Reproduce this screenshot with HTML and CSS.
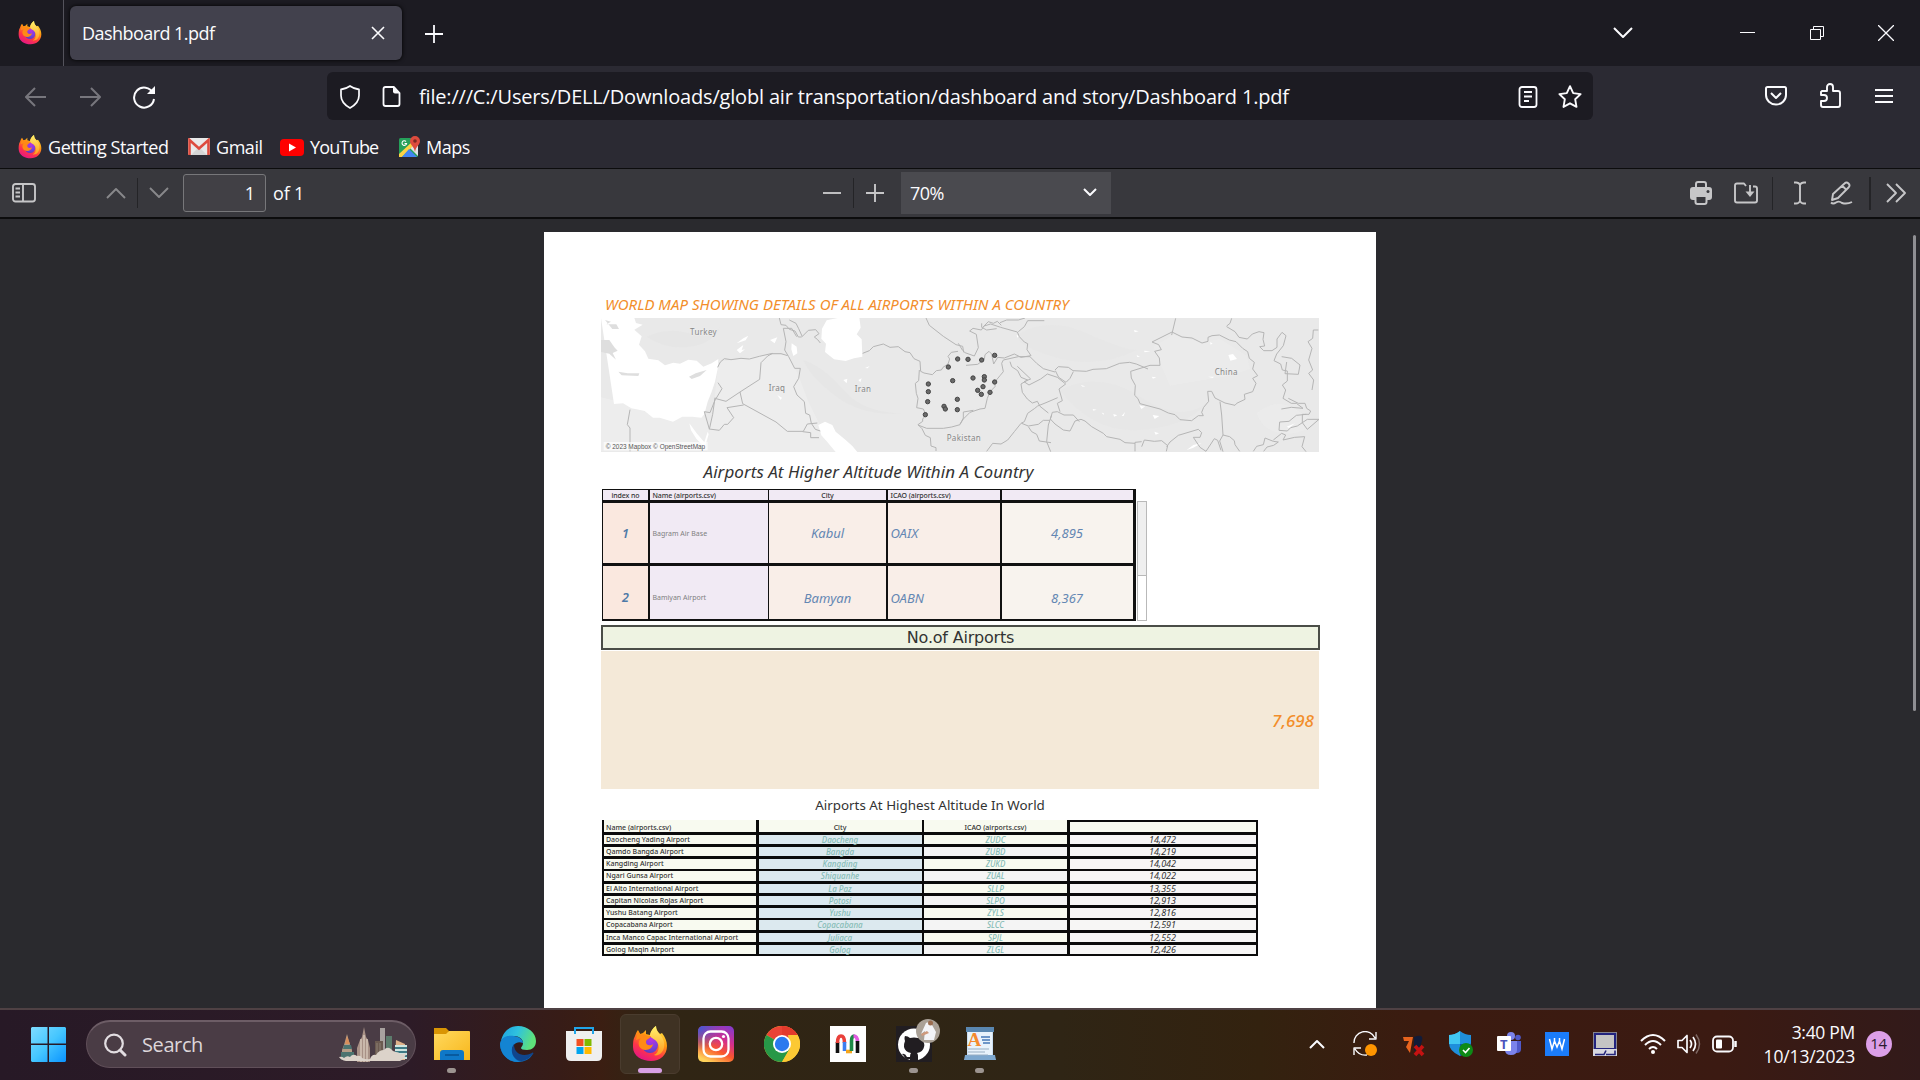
FILE: index.html
```html
<!DOCTYPE html>
<html lang="en">
<head>
<meta charset="utf-8">
<title>Dashboard 1.pdf</title>
<link rel="stylesheet" href="styles.css">
</head>
<body>
<svg width="0" height="0" class="defs">
  <defs>
    <linearGradient id="ffBody" x1=".8" y1="0" x2=".3" y2="1"><stop offset="0" stop-color="#fff44f"/><stop offset=".4" stop-color="#ff980e"/><stop offset=".7" stop-color="#ff3647"/><stop offset="1" stop-color="#e31587"/></linearGradient>
    <radialGradient id="ffGlobe" cx=".6" cy=".2" r=".8"><stop offset="0" stop-color="#b833e1"/><stop offset=".6" stop-color="#7a3fe0"/><stop offset="1" stop-color="#5b3fc0"/></radialGradient>
    <linearGradient id="ffFlame" x1="0" y1="0" x2="0" y2="1"><stop offset="0" stop-color="#fff36e"/><stop offset="1" stop-color="#ff9a1f"/></linearGradient>
    <symbol id="firefox" viewBox="0 0 36 36">
      <path d="M3 10C4 7 5 5 6 4l2 4 3-1 3-3v4l4 1c1-4 3-7 6-9 0 4 2 6 4 8l2-1c3 4 5 8 5 13 0 9-7 15-16 15S1 30 1 21c0-4 0-8 2-11z" fill="url(#ffBody)"/>
      <circle cx="18" cy="19" r="8" fill="url(#ffGlobe)"/>
      <path d="M24 0c0 5 3 7 6 11 3 5 3 11 0 15-2 3-6 4-8 3 5-2 6-9 3-13-2-3-5-3-7-6 0-4 3-8 6-10z" fill="url(#ffFlame)"/>
      <path d="M6 5l3 4c2-1 4-1 6 1h4c-1 3-5 3-5 6 0 4 5 4 7 2-1 7-11 8-14 2-1-3 0-6 2-8L4 14z" fill="#ff8a16"/>
    </symbol>
  </defs>
</svg>
<div class="screen">
  <header class="tabbar">
    <div class="pinned"><svg width="24" height="24"><use href="#firefox"/></svg></div>
    <div class="tab"><span class="tab-title">Dashboard 1.pdf</span>
      <svg width="14" height="14" viewBox="0 0 14 14" class="line"><path d="M1 1l12 12M13 1L1 13"/></svg></div>
    <svg class="newtab line" width="18" height="18" viewBox="0 0 18 18"><path d="M9 0v18M0 9h18" stroke-width="1.8"/></svg>
    <div class="winctl">
      <svg class="line" width="20" height="12" viewBox="0 0 20 12"><path d="M1 1l9 9 9-9" stroke-width="2"/></svg>
      <svg class="line" width="16" height="16" viewBox="0 0 16 16"><path d="M0 7.5h15" stroke-width="1"/></svg>
      <svg class="line" width="16" height="16" viewBox="0 0 16 16"><path d="M1.500 4.500h10v10h-10zM4.500 4V1.500h10v10H12" stroke-width="1"/></svg>
      <svg class="line" width="16" height="16" viewBox="0 0 16 16"><path d="M0 0l16 16M16 0L0 16" stroke-width="1.300"/></svg>
    </div>
  </header>

  <nav class="navbar">
    <div class="navbtns">
      <svg class="line dim" width="22" height="20" viewBox="0 0 22 20"><path d="M10 1L1 10l9 9M1 10h20"/></svg>
      <svg class="line dim" width="22" height="20" viewBox="0 0 22 20"><path d="M12 1l9 9-9 9M21 10H1"/></svg>
      <svg class="line" width="24" height="24" viewBox="0 0 24 24"><path d="M21 8A10 10 0 1 0 22 14" stroke-width="2"/><path d="M23 1v8h-8z" fill="#fbfbfe" stroke="none"/></svg>
    </div>
    <div class="urlbar">
      <svg class="line" width="24" height="24" viewBox="0 0 24 24"><path d="M12 1C9 3 6 4 2 4.500v6C2 16 6 20 12 23c6-3 10-7 10-12.500v-6C18 4 15 3 12 1z" stroke-width="1.900" transform="translate(1.200 0) scale(.9 1)"/></svg>
      <svg class="line" width="20" height="24" viewBox="0 0 20 24"><path d="M12 2H3.500Q1.500 2 1.500 4v15q0 2 2 2h12q2 0 2-2V8z" stroke-width="1.800"/><path d="M11 1.500l7 7h-5q-2 0-2-2z" fill="#fbfbfe" stroke="none"/></svg>
      <span class="url">file:///C:/Users/DELL/Downloads/globl air transportation/dashboard and story/Dashboard 1.pdf</span>
      <svg class="line" width="20" height="22" viewBox="0 0 20 22"><rect x="1.500" y="1" width="17" height="20" rx="2.500" stroke-width="1.800"/><path d="M6 6h8M6 10.500h8M6 15h5" stroke-width="1.800"/></svg>
      <svg class="line" width="24" height="24" viewBox="0 0 24 24"><path d="M12 1.200l3.200 6.900 7.400 1-5.400 5.200 1.300 7.600-6.500-3.600-6.500 3.600 1.300-7.600L1.400 9.100l7.400-1z" stroke-width="1.900"/></svg>
    </div>
    <div class="navend">
      <svg class="line" width="24" height="22" viewBox="0 0 24 22"><path d="M3.500 2h17Q22 2 22 3.500V10a10 9.500 0 0 1-20 0V3.500Q2 2 3.500 2z" stroke-width="2"/><path d="M7 8l5 5 5-5" stroke-width="2"/></svg>
      <svg class="line" width="24" height="26" viewBox="0 0 24 26"><path d="M3 8h5V4a3 3 0 0 1 6 0v4h5q2 0 2 2v12q0 2-2 2H4q-2 0-2-2v-4h3a3 3 0 0 0 0-6H2V9z" stroke-width="1.900"/></svg>
      <svg class="line" width="18" height="16" viewBox="0 0 18 16"><path d="M0 2h18M0 8h18M0 14h18" stroke-width="1.800"/></svg>
    </div>
  </nav>

  <div class="bookmarks">
    <a class="bm bm1"><svg width="24" height="24"><use href="#firefox"/></svg>Getting Started</a>
    <a class="bm bm2"><svg width="22" height="18" viewBox="0 0 22 18"><rect width="22" height="17" rx="1.500" fill="#e9e9e9"/><path d="M3 17l8-8 8 8" fill="#d5d5d5"/><path d="M1.500 17V2L11 10.500 20.500 2v15" fill="none" stroke="#dd4b3e" stroke-width="2.600"/></svg>Gmail</a>
    <a class="bm bm3"><svg width="24" height="17" viewBox="0 0 24 17"><rect width="24" height="17" rx="4" fill="#f00"/><path d="M9 4.500v8l7-4z" fill="#fff"/></svg>YouTube</a>
    <a class="bm bm4"><svg width="22" height="22" viewBox="0 0 22 22"><rect x="1" y="2" width="19" height="19" rx="1.500" fill="#25a05a"/><path d="M20 4v16L11 11z" fill="#dfe3e6"/><path d="M1 21v-3L14 6l2 3-12 12z" fill="#fbd345"/><path d="M4 21l7-8 8 8z" fill="#4285f4"/><path d="M17 0a5 5 0 0 1 5 5c0 4-4 5-5 11-1-6-5-7-5-11a5 5 0 0 1 5-5z" fill="#dd4b3e"/><circle cx="17" cy="5" r="1.800" fill="#7c2a22"/><path d="M8 5.500a2.300 2.300 0 1 0 .6 2H6.500" fill="none" stroke="#fff" stroke-width="1.100"/></svg>Maps</a>
  </div>

  <div class="pdfbar">
    <div class="pdf-left">
      <svg class="tool" width="24" height="20" viewBox="0 0 24 20"><rect x="1" y="1" width="22" height="17.500" rx="2.500"/><path d="M11 1v17M3.500 5.500h4.500M3.500 9.500h4.500M3.500 13.500h4.500"/></svg>
      <svg class="tool faint up" width="20" height="12" viewBox="0 0 20 12"><path d="M1 11l9-9 9 9"/></svg>
      <i class="sep"></i>
      <svg class="tool faint" width="20" height="12" viewBox="0 0 20 12"><path d="M1 1l9 9 9-9"/></svg>
      <span class="pageinput">1</span><span class="of">of 1</span>
    </div>
    <div class="pdf-zoom">
      <svg class="tool" width="20" height="20" viewBox="0 0 20 20"><path d="M1 10h18"/></svg>
      <i class="sep"></i>
      <svg class="tool" width="20" height="20" viewBox="0 0 20 20"><path d="M1 10h18M10 1v18"/></svg>
      <span class="select">70%<svg class="line" width="14" height="9" viewBox="0 0 14 9"><path d="M1 1l6 6 6-6" stroke-width="2"/></svg></span>
    </div>
    <div class="pdf-right">
      <svg width="24" height="24" viewBox="0 0 24 24" fill="#c6c6c8"><path d="M7 6V3q0-2 2-2h6q2 0 2 2v3" fill="none" stroke="#c6c6c8" stroke-width="2"/><path d="M4 6h16q3 0 3 3v7q0 3-3 3h-3v-4H7v4H4q-3 0-3-3V9q0-3 3-3z"/><circle cx="19" cy="10.500" r="1.500" fill="#38383d"/><path d="M6.500 15h11v6q0 2-2 2h-7q-2 0-2-2z" fill="#38383d" stroke="#c6c6c8" stroke-width="2"/></svg>
      <svg class="tool" width="24" height="22" viewBox="0 0 24 22"><path d="M12 4l-2-2.500H3q-2 0-2 2v15q0 2 2 2h18q2 0 2-2v-12Q23 4.500 21 4.500h-2M16 3v8"/><path d="M11.500 9.500h9L16 15z" fill="#c6c6c8" stroke="none"/></svg>
      <i class="sep s1"></i>
      <svg class="tool" width="14" height="24" viewBox="0 0 14 24"><path d="M1 1.500h2q3 0 4 2.500 1-2.500 4-2.500h2M7 4v16M1 22.500h2q3 0 4-2.500 1 2.500 4 2.500h2"/></svg>
      <svg class="tool" width="24" height="24" viewBox="0 0 24 24"><path d="M3 13L14.500 2.500q2-2 4 0t0 4L8 17l-6 2zM12.500 5l4 4M1 21.500q2 2 5 0t6 .5q5 1.500 10-1"/></svg>
      <i class="sep s2"></i>
      <svg class="tool" width="22" height="20" viewBox="0 0 22 20"><path d="M2 1l9 9-9 9M11 1l9 9-9 9"/></svg>
    </div>
  </div>

  <main class="viewer">
    <article class="page">
      <h1 class="maptitle">WORLD MAP SHOWING DETAILS OF ALL AIRPORTS WITHIN A COUNTRY</h1>
      <svg class="map" width="718" height="134" viewBox="0 0 2154 402">
        <rect width="2154" height="402" fill="#e9e9e9"/>
        <g transform="translate(-33 -114)">
          <g fill="#ededed"><path d="M33 352l60 15 40 20 80 17 60-12 65 2 20 55-5 65H33z"/><path d="M385 245l150-20 60 0 30 60 30 80 35 70 60 80H350l10-70 15-100z"/></g>
          <g fill="#e6e6e6"><path d="M170 170q60-30 130-10t90-20q-20 50-90 60t-130-30z"/><path d="M640 240q60 20 120 90t180 70q-120 10-200-50t-100-110z"/></g>
          <path d="M33 114h100l5 15 20 5-25 15 22 20-8 25 18 20 10 22 30 5 20 15 25-8 20 3 25-12 25 3 20 18 25-10 20-13-2 30-8 38-10 30-12 30-10 38-9 10-27-3-30 0-28 15-40-12-20 0-25-20-40-8-25-15-27 2z" fill="#fff"/>
          <path d="M33 180l25 0 15 22 10 10-15 7 10 20-20-18-25-5zM45 120l18 5-14 8 30 0 8 14-20 0zM85 275l28 5 35 0-3 8-50-2zM297 290l20-10 33-10-20 18-25 9z" fill="#dedede"/>
          <path d="M710 121l38-8 60 0 4 30-12 20 15 15 2 52-25 5-25 8-35-5-27-22 3-25-14-15 2-30zM685 435l20-10 22 10 10 20 30 25 20 18 15 18h-65l-25-30-18-20zM298 430l22 30 23 27 10-32 3 8-12 40-10-12-15-15-16-25zM605 190l15 10 2 20-12 8-6-20zM540 180l22-8-8 18zM440 210l20-15-5 15 10-2-15 12zM440 190l20-15 15-8-8 14zM760 300l12-4-2 14zM805 300l10-5-4 12zM562 345l14 8-4 7zM825 264l14-6-6 7z" fill="#fff"/>
          <g class="border">
            <path d="M383 262l8-16 12-10 20 3 30-4 25 2 30-8 35-8 30 0 20 6M548 220l-15 8-20 20-4 50-56 36-45 30-30-8 18-30-12-18M450 336l8 35 100 55 34 28h48l12-22 30-3M375 353l-7 50-10 45M378 353l-18 45-17-3 15 52 30 4 15-18 10 0 18-20-20-30 50-8M638 455l24 3 0 15 25 0M120 514v-70l-8-10 8-45M580 145l8 40-4 25 12 20 18 35 17 0-5 30-15 25 10 25 22 20 4 35 12 5 5 25 12 18 15 5M568 114l5 20 15 2 10 12 17 5 10 18 10 0 20-20 22-2 10 12-14 10 10 8 8 10M598 120l20 10 8 16 10 22M580 145l25 0 15 25M818 220l20-8 12-12 30-8 20 10 25-2 20 15 15 3 12 18 18 8 2 30 10 5 25 5 12-12 15-2 5-8 15-10 5-15-5-8 10-12 20-3M1008 114l10 22 42 33 38 25 20 5 3 18M988 270l-2 32-10 8 3 30 5 15-4 28 20 4 8 18-10 12 0 7-14 10 12 12 10 20 15 7 2 25 15 5 0 10M984 435l26 10 50 0 25-4 25-7 10-20 0-18 30-5"/>
          </g>
        </g>
        <g transform="translate(1077 -114)">
          <g fill="#e7e7e7"><path d="M180 160q90-50 200 0t150 50q-120 60-250 20T180 160z"/><path d="M300 330q120-60 240 20t200 20q-60 70-200 80t-240-120z"/></g>
          <g fill="#ededed"><path d="M890 400q60-50 120-10t60 20q-20 50-90 50t-90-60zM580 200l60-35 80 22 60-10 80 50 10 40-60 20-180 30z" opacity=".6"/></g>
          <path d="M805 225l14-3 12 15-20 5zM522 150l14 4-12 3zM552 212l20 2-18 3zM530 225l10 5-8 1zM578 405l20 3-14 9zM538 375l8 4 10 0-12 8zM460 402l12 4-10 4zM485 408l10-12-4 12zM398 387l12 2-10 3zM575 290l14 2-10 4zM744 290l18 0-4 4zM362 315l14 4-8 1zM750 187l8 3-6 4zM425 398l6 1 0 6zM170 165l8 2-6 6zM680 510l20-15 25-6-25 14zM980 440l25-10-18 14zM583 455l14 5-10 4z" fill="#fff"/>
          <g class="border">
            <path d="M-5 190l12 20 8 8 28 10 12-25-6-40-20-10 10-8 25 5 8-12 20-6 30 10 50 14 6 14 15 16 10 5-2 18 12 18-30 5-20-10-30 12-20-2-12 20-6-30-8-8-12 10-2 14-20 15-35 3M65 130l0 12 15 8 30-4M130 240l45-10 35 0 20 20 20 16 35 10M285 270l10-10 30 2 14 10 40 2 20-6 40-2 40-16 30-3 20 5 35 15M340 275l-10 20-12 12-22-15-10-20M570 256l30 0-2-22-14-20 20-5-8-15-20-8 60-30 30 15 30 3 30 15 18-5 0-12 12-5 22-2 30 15 20 5 20 20 15 10 5 20 15 12-5 20 15 20-15 8 10 15-10 25-25 8 2 15-25 12-5 6-30-7-30-15-10-20-12 0 3 30-15 18-6 15 5 10-15 0-20 15-35-3-15-15-20-5-25-12-30-8-30-8-6-15-10-10 2-30-12-22-2-20zM635 165l12-50M800 140l25 15 12 17 25 5 15-15 20-7 15 3-3 20 5 20-15 2 12 12 25 0 15-10 0-25 15-20 12 10-8 30-20 25-8 20 20 10 5 18 15 3 0 30-15 12 10 15-8 25 25 15 15 0 20 15-35-3-30 5M815 115l-5 15-10 8M965 230l30 5 25 20-5 28-40-2 5-35M1075 150l-15 0-2 25-14 10 12 20-10 35 12 30-12 10 15 20-5 30M985 355l30 15 20 0 5 15 12 8-5 10-20 0 0 25 15 20 35-30-35 0-30 20-20 5-10 10-25-2 2-25 28-2 22-18 30-3M780 365l5 40 4 60-10 18 10 32M789 465l20 5 14 12 2 12 14 20M880 514l10-15 20-5 5-20 25 10 15 2-14 10-20 5-10 13M940 480l25-20 12 5-8 15 35-8 30-2-8 30 12 15M620 500l10-14 25-20 60-18 10 10-5 14-20 0 20 30 18 12 25-38 10 5 10 30M545 500l8-20 30 4 22-2 18 15-4 17M545 485l-20 2 0 27M525 490l-30-2-15-10-40-8-10-10-35-20-20-17-12-5-18 5-15 30-20-3-25-18-14-15 6-20 15-2 20 10 28 0 18 20"/>
            <path d="M130 240l-5 10 5 25-10 12-15 18 0 15-15 15-8 20-7 30-15 2-30 10-20 20-10 15M80 514l18-24 25 2 20-12 20-25 20-25 10-5 10-25 20-14 10-8 25-10 35-15M185 430l20 8 30-5 15-12 20 0M205 440l10 15 15 8 8 20 35 5M300 395l-8-25 15-8-10-35 20-15-25-20-30-10-20 15-35 18-15-10 20-8-40-38M275 405l-10 30-5 50 12 30M150 245l5 15 18 12 10 20 20 8-20 12 4 25 15 20 15 12 15-5 8 15 25 20M70 140l15-15 15 5 12-6 12 12M120 128l20-8 35 0 20-6M175 155l18-15 10-18 50 0" />
          </g>
        </g>
        <g class="maplabels">
          <text x="267" y="52">Turkey</text><text x="503" y="219">Iraq</text><text x="761" y="222">Iran</text><text x="1037" y="368">Pakistan</text><text x="1841" y="171">China</text>
        </g>
        <rect x="8" y="372" width="312" height="25" fill="#fff" opacity=".65"/>
        <text x="14" y="393" class="credit">© 2023 Mapbox © OpenStreetMap</text>
        <g class="pins">
          <circle cx="1070" cy="123" r="6.500"/><circle cx="1101" cy="124" r="6.500"/><circle cx="1142" cy="126" r="6.500"/><circle cx="1181" cy="112" r="6.500"/><circle cx="1042" cy="147" r="6.500"/><circle cx="1055" cy="188" r="6.500"/><circle cx="982" cy="198" r="6.500"/><circle cx="982" cy="221" r="6.500"/><circle cx="980" cy="251" r="6.500"/><circle cx="973" cy="290" r="6.500"/><circle cx="1029" cy="265" r="6.500"/><circle cx="1033" cy="273" r="6.500"/><circle cx="1069" cy="244" r="6.500"/><circle cx="1069" cy="275" r="6.500"/><circle cx="1116" cy="180" r="6.500"/><circle cx="1150" cy="176" r="6.500"/><circle cx="1150" cy="186" r="6.500"/><circle cx="1181" cy="192" r="6.500"/><circle cx="1146" cy="206" r="6.500"/><circle cx="1130" cy="217" r="6.500"/><circle cx="1167" cy="223" r="6.500"/><circle cx="1141" cy="229" r="6.500"/>
        </g>
      </svg>

      <h2 class="h-country">Airports At Higher Altitude Within A Country</h2>
      <div class="country">
        <div class="ctable">
          <b class="ch c">index no</b><b class="ch">Name (airports.csv)</b><b class="ch c">City</b><b class="ch">ICAO (airports.csv)</b><b class="ch"></b>
          <span class="ix">1</span><span class="nm">Bagram Air Base</span><span class="ct c">Kabul</span><span class="ct">OAIX</span><span class="el c">4,895</span>
          <span class="ix low">2</span><span class="nm low">Bamiyan Airport</span><span class="ct c low">Bamyan</span><span class="ct low">OABN</span><span class="el c low">8,367</span>
        </div>
        <div class="cscroll"><i></i></div>
      </div>

      <div class="count-head">No.of Airports</div>
      <div class="count">7,698</div>

      <h2 class="h-world">Airports At Highest Altitude In World</h2>
      <div class="wtable">
        <div class="wh">Name (airports.csv)</div><div class="wh c">City</div><div class="wh c">ICAO (airports.csv)</div><div class="wh"></div>
        <div class="n">Daocheng Yading Airport</div><div class="t">Daocheng</div><div class="i">ZUDC</div><div class="e">14,472</div>
        <div class="n">Qamdo Bangda Airport</div><div class="t">Bangda</div><div class="i alt">ZUBD</div><div class="e">14,219</div>
        <div class="n">Kangding Airport</div><div class="t">Kangding</div><div class="i">ZUKD</div><div class="e">14,042</div>
        <div class="n">Ngari Gunsa Airport</div><div class="t">Shiquanhe</div><div class="i alt">ZUAL</div><div class="e">14,022</div>
        <div class="n">El Alto International Airport</div><div class="t">La Paz</div><div class="i">SLLP</div><div class="e">13,355</div>
        <div class="n">Capitan Nicolas Rojas Airport</div><div class="t">Potosi</div><div class="i alt">SLPO</div><div class="e">12,913</div>
        <div class="n">Yushu Batang Airport</div><div class="t">Yushu</div><div class="i">ZYLS</div><div class="e">12,816</div>
        <div class="n">Copacabana Airport</div><div class="t">Copacabana</div><div class="i alt">SLCC</div><div class="e">12,591</div>
        <div class="n">Inca Manco Capac International Airport</div><div class="t">Juliaca</div><div class="i">SPJL</div><div class="e">12,552</div>
        <div class="n">Golog Maqin Airport</div><div class="t">Golog</div><div class="i alt">ZLGL</div><div class="e">12,426</div>
      </div>
    </article>
    <i class="vscroll"></i>
  </main>

  <footer class="taskbar">
    <svg class="start" width="35" height="35" viewBox="0 0 35 35"><defs><linearGradient id="win" x1="0" y1="0" x2="1" y2="1" gradientUnits="objectBoundingBox"><stop offset="0" stop-color="#7fdcff"/><stop offset=".5" stop-color="#45c6ff"/><stop offset="1" stop-color="#0a93ff"/></linearGradient></defs><path d="M1 0h15.500v16.500H0V1zM18 0h16l1 1v15.500H18zM0 18h16.500v17H1l-1-1zM18 18h17v16l-1 1H18z" fill="url(#win)"/></svg>
    <div class="search">
      <svg width="24" height="24" viewBox="0 0 24 24" fill="none" stroke="#e2dde1" stroke-linecap="round"><circle cx="11" cy="10.500" r="8.800" stroke-width="2.200"/><path d="M17 17l5 5" stroke-width="3"/></svg>
      <span>Search</span>
      <svg width="70" height="38" viewBox="0 0 70 38">
        <path d="M4 34V24l2-5 3-11 3 11 2 5v10z" fill="#b59d87"/><path d="M6 19h7l1 4H5zM3 26h13v8H3z" fill="#4c7470"/><path d="M9 10l3 8H7z" fill="#d98f5a"/>
        <path d="M19 36V22l3-8 2-3 2-10 2 10 2 3 2 8v14z" fill="#a89186"/><path d="M23 36V13M26 36V9M29 36V13" stroke="#e0d2c4" stroke-width="1.200"/>
        <path d="M42 2h5v24h-5z" fill="#a8a19f"/><path d="M48 10h6v18h-6z" fill="#5c7b6c"/><path d="M37 15h8v14h-8z" fill="#6b5a50"/><path d="M39 17v12M42 17v12" stroke="#8d8075"/>
        <path d="M58 14l9 4v16H57z" fill="#dfb28a"/><path d="M57 19h12v14H57z" fill="#cfe4df"/><path d="M57 22h12M57 26h12M57 30h12" stroke="#3e7a85" stroke-width="2"/>
        <path d="M1 31q3-1 5 1 3-3 6-1 3-4 7-1 4-1 5 2 4 2 8 1 2-5 6-4 3-5 8-5 3-4 7-1 2 3 5 3 3 0 4 2 4 0 6-1-1 6-6 8H8q-5-1-7-4z" fill="#dcd3ca"/>
      </svg>
    </div>
    <div class="apps">
      <div class="app"><svg width="36" height="36" viewBox="0 0 36 36"><defs><linearGradient id="fold" x1="0" y1="0" x2="1" y2="1"><stop offset="0" stop-color="#ffd95e"/><stop offset="1" stop-color="#f8b71c"/></linearGradient></defs><path d="M0 2h12l3 3-3 6H0z" fill="#d99504"/><path d="M0 8h12l3-3h20q1 0 1 1v28H0z" fill="url(#fold)"/><path d="M6 34v-7q0-3 3-3h18q3 0 3 3v7z" fill="#0f78c8"/><path d="M11 29h14" stroke="#075395" stroke-width="1.600"/></svg><i class="dot"></i></div>
      <div class="app"><svg width="36" height="36" viewBox="0 0 36 36"><defs><linearGradient id="ed" x1="0" y1="0" x2="1" y2=".3"><stop offset="0" stop-color="#1d9fe0"/><stop offset=".5" stop-color="#2fc2df"/><stop offset="1" stop-color="#5ee27a"/></linearGradient></defs><path d="M18 36A18 18 0 0 1 0 18l10-6 6 2-4 8 6 10 8 1 7-5q-5 8-15 8z" fill="#0d6cbd"/><path d="M1 15C3 5 10 0 18 0c10 0 18 7 18 15 0 6-4 9-9 9-4 0-6-1-6-2 0-1 2-2 2-5 0-4-4-7-9-7S4 11 1 15z" fill="url(#ed)"/><path d="M0 17C2 10 9 9 14 10c6 1 9 4 9 7-7-3-12 3-11 9s5 9 9 10C8 37 0 28 0 17z" fill="#1484d2"/><path d="M14 18c-3 4-3 10 1 14s10 5 18-4c1-1 0-2-1-1-8 4-18 2-18-9z" fill="#10458c"/></svg></div>
      <div class="app"><svg width="36" height="36" viewBox="0 0 36 36"><path d="M0 5h36v25q0 5-5 5H5q-5 0-5-5z" fill="#efefef"/><path d="M9 8V2h18v6" fill="none" stroke="#20a5e8" stroke-width="2"/><path fill="#f25022" d="M10.500 13h7v7h-7z"/><path fill="#7fba00" d="M18.500 13h7v7h-7z"/><path fill="#00a4ef" d="M10.500 21h7v7h-7z"/><path fill="#ffb900" d="M18.500 21h7v7h-7z"/></svg></div>
      <div class="app active"><svg width="36" height="36"><use href="#firefox"/></svg><i class="dot wide"></i></div>
      <div class="app"><svg width="36" height="36" viewBox="0 0 36 36"><defs><linearGradient id="ig" x1=".3" y1="1" x2=".8" y2="0"><stop offset="0" stop-color="#ffd25a"/><stop offset=".35" stop-color="#f9572c"/><stop offset=".65" stop-color="#d52e8c"/><stop offset="1" stop-color="#8a3ac8"/></linearGradient><radialGradient id="igb" cx="0" cy="0" r=".7"><stop offset="0" stop-color="#3a5bd8"/><stop offset="1" stop-color="#3a5bd8" stop-opacity="0"/></radialGradient></defs><rect width="36" height="36" rx="5" fill="url(#ig)"/><rect width="36" height="36" rx="5" fill="url(#igb)"/><rect x="5.500" y="5.500" width="25" height="25" rx="7" fill="none" stroke="#fff" stroke-width="2.300"/><circle cx="18" cy="18" r="6.200" fill="none" stroke="#fff" stroke-width="2.300"/><circle cx="25.500" cy="10.500" r="1.600" fill="#fff"/></svg></div>
      <div class="app"><svg width="36" height="36" viewBox="0 0 36 36"><circle cx="18" cy="18" r="18" fill="#fcc934"/><path d="M18 18L2.400 9A18 18 0 0 1 33.600 9z" fill="#ea4335"/><path d="M18 0A18 18 0 0 1 33.600 9H18z" fill="#e23a2c"/><path d="M2.400 9A18 18 0 0 0 18 36l7.800-13.500L18 18z" fill="#279847"/><path d="M33.600 9A18 18 0 0 1 18 36l8-13.500L24 9z" fill="#fcc934"/><circle cx="18" cy="18" r="9" fill="#fff"/><circle cx="18" cy="18" r="7.200" fill="#2a79ee"/></svg></div>
      <div class="app"><svg width="36" height="36" viewBox="0 0 36 36"><path fill="#fff" d="M0 0h36v36H0z"/><g fill="none" stroke-width="3.600"><path d="M7.500 27V16" stroke="#111"/><path d="M7.500 17q0-7 3.500-7t3.500 7" stroke="#e9403a"/><path d="M14.500 16v9" stroke="#3c7df0"/><path d="M16 25.500h6" stroke="#f5a51d"/><path d="M21.500 25V15q0-5 3-5" stroke="#1e8a47"/><path d="M23.500 10q4 0 4 6" stroke="#e05be0"/><path d="M27.500 15v12" stroke="#111"/></g></svg></div>
      <div class="app"><svg width="36" height="36" viewBox="0 0 36 36"><path fill="#211d21" d="M0 0h36v36H0z"/><circle cx="18" cy="18.500" r="16" fill="#fff"/><path d="M9 10q3 0 5 2 4-1 8 0 2-2 5-2 1 3 0 5 2 3 1 6-1 5-7 6 1 1 1 3v7h-8v-4q-5 1-6-3l-2-2q3-1 5 3h3q0-3 1-4-6-1-7-6 0-4 1-6-1-3 0-5z" fill="#211d21"/></svg><svg class="avatar" width="24" height="24" viewBox="0 0 24 24"><circle cx="12" cy="12" r="12" fill="#aaa197"/><path d="M10 4q4-2 6 2l4 7-2 8H8l1-9-4 3z" fill="#f3f4f8"/><circle cx="14.500" cy="4" r="2.500" fill="#9b6d50"/><path d="M5 15l6-3 2 2-7 3z" fill="#cf9a7d"/></svg><i class="dot"></i></div>
      <div class="app"><svg width="32" height="36" viewBox="0 0 32 36"><path d="M3 1h26v30l3 3H0l3-3z" fill="#c9ddf0"/><path d="M2 1h28v5H2z" fill="#5a87b0"/><path d="M1 29h30l1 5H0z" fill="#7da7ce"/><path d="M4 6h24v23H4z" fill="#e8f2fb"/><path d="M17 11h9M18 14h8M19 17h7" stroke="#4678b8" stroke-width="1.400"/><path d="M4 23h21M4 26h17M4 29h20" stroke="#98aec3" stroke-width="1"/><text x="3.500" y="20" class="wp">A</text></svg><i class="dot"></i></div>
    </div>
    <div class="tray">
      <svg width="16" height="10" viewBox="0 0 16 10" class="line"><path d="M1 9l7-7 7 7" stroke-width="2"/></svg>
      <svg width="26" height="26" viewBox="0 0 26 26" class="line"><path d="M2 12A11 11 0 0 1 23 7M24 1v7h-7M2 24v-7h7M3 18q4 7 12 6" stroke-width="1.400"/><circle cx="19" cy="19" r="6" fill="#ff9500" stroke="none"/></svg>
      <svg width="26" height="26" viewBox="0 0 26 26"><path d="M14 6q10-4 8 4t-8 10z" fill="#101b39"/><path d="M3 6h10l-1 5-2 11-4-6 3-6H4z" fill="#e8641e"/><path d="M15 15l8 9M23 15l-8 9" stroke="#c51212" stroke-width="3.600"/></svg>
      <svg width="26" height="26" viewBox="0 0 26 26"><path d="M12 0q5 4 11 4v8q0 8-11 13Q1 20 1 12V4q6 0 11-4z" fill="#1f8fdc"/><path d="M12 0v13H1V4q6 0 11-4z" fill="#41c7f2"/><path d="M12 13h11q0 8-11 12z" fill="#0c59a4"/><circle cx="18" cy="19" r="7" fill="#0e8a16"/><path d="M15 19l2.500 2.500L21.500 17" fill="none" stroke="#fff" stroke-width="1.600"/></svg>
      <svg width="26" height="26" viewBox="0 0 26 26"><circle cx="15" cy="5" r="4" fill="#7b83eb"/><circle cx="22" cy="6.500" r="2.800" fill="#5059c9"/><path d="M17 10h8v8q0 4-4 4h-4z" fill="#5059c9"/><path d="M9 10h12v9q0 5-6 5t-6-5z" fill="#7b83eb"/><rect x="1" y="5" width="14" height="15" rx="1" fill="#fff"/><text x="4" y="17.500" class="tm">T</text></svg>
      <svg width="24" height="24" viewBox="0 0 24 24"><path d="M0 0h24v24H0z" fill="#1b7cfa"/><path d="M4.500 7l2.500 10 2.500-8 2.500 6 2.500-6 2.500 8 2.500-10M9.500 6v6M14.500 6v6" fill="none" stroke="#fff" stroke-width="1.500"/></svg>
      <svg width="24" height="24" viewBox="0 0 24 24"><path d="M0 0h24v17H0z" fill="#85858f"/><path d="M1 1h22v16H1z" fill="#22237e"/><path d="M3 3h18v13H3z" fill="#c4c4c4"/><path d="M0 17h24v7H0z" fill="#d7d7df"/><path d="M2 22.500h9l2-4M13 22.500h9v-4" fill="none" stroke="#24247a" stroke-width="1.600"/></svg>
      <svg width="26" height="22" viewBox="0 0 26 22" class="line"><path d="M1 8q12-12 24 0M5 12q8-8 16 0M9 16q4-4 8 0" stroke-width="2"/><circle cx="13" cy="19" r="2" fill="#fff" stroke="none"/></svg>
      <svg width="24" height="22" viewBox="0 0 24 22" class="line sound"><path d="M1 7.500h4l5-5v17l-5-5H1zM13 7q3 4 0 8M16 4q5 7 0 14" stroke-width="1.700"/><path d="M19 1.500q7 9.500 0 19" stroke-width="1.500" opacity=".35"/></svg>
      <svg width="26" height="18" viewBox="0 0 26 18" class="line batt"><rect x="1" y="1.500" width="20" height="15" rx="4" stroke-width="1.800"/><rect x="4" y="4.500" width="6" height="9" rx="1" fill="#fff" stroke="none"/><path d="M23.500 6v6" stroke-width="2.500"/></svg>
      <div class="clock"><span class="time">3:40 PM</span><span class="date">10/13/2023</span></div>
      <span class="badge">14</span>
    </div>
  </footer>
</div>
</body>
</html>
```
FILE: styles.css
```css
* { box-sizing: border-box; }
body { margin: 0; background: #2a2a2e; font-family: "Open Sans", "Noto Sans", sans-serif; color: #fbfbfe; }
h1, h2 { margin: 0; font-weight: 400; }
svg { display: block; flex: none; }
i { display: block; }
.defs { position: absolute; }
.screen { width: 1920px; height: 1080px; overflow: hidden; display: flex; flex-direction: column; white-space: nowrap; }
.line { fill: none; stroke: #fbfbfe; stroke-width: 1.6; stroke-linejoin: round; }
.dim { stroke: #77767d; stroke-width: 2; }

.tabbar { height: 66px; background: #1c1b22; display: flex; align-items: center; }
.pinned { width: 64px; height: 66px; border-right: 1px solid #54535c; padding-left: 18px; display: flex; align-items: center; }
.tab { margin-left: 6px; width: 332px; height: 54px; border-radius: 6px; background: #42414d; box-shadow: 0 0 4px #000; display: flex; align-items: center; justify-content: space-between; padding: 0 17px 0 12px; font-size: 18px; }
.tab-title { letter-spacing: -.55px; }
.newtab { margin-left: 23px; margin-top: 1px; }
.winctl { margin-left: auto; display: grid; grid-template-columns: 182px 68px 69px 69px; justify-items: center; align-items: center; }

.navbar { height: 60px; background: #2b2a33; display: flex; align-items: center; }
.navbtns { width: 327px; padding: 1px 0 0 25px; display: flex; gap: 32px; align-items: center; }
.navbtns svg:last-child { margin-left: -1px; }
.urlbar { width: 1266px; height: 48px; background: #1c1b22; border-radius: 6px; display: flex; align-items: center; padding: 1px 11px 0; }
.urlbar svg:nth-child(2) { margin-left: 20px; }
.url { margin-left: 17px; flex: 1; font-size: 20px; letter-spacing: -.18px; }
.urlbar svg:last-child { margin-left: 20px; }
.navend { flex: 1; display: flex; align-items: center; justify-content: flex-end; padding-right: 27px; }
.navend svg:nth-child(2) { margin: 0 32px 0 31px; }

.bookmarks { height: 43px; background: #2b2a33; border-bottom: 1px solid #0c0c0d; display: flex; align-items: center; padding-left: 18px; font-size: 18px; }
.bm { display: flex; align-items: center; gap: 6px; letter-spacing: -.45px; }
.bm1 { width: 170px; } .bm2 { width: 92px; } .bm3 { width: 118px; letter-spacing: -.8px; }

.pdfbar { height: 50px; background: #38383d; border-bottom: 2px solid #0c0c0d; display: flex; align-items: center; font-size: 18px; }
.tool { fill: none; stroke: #c6c6c8; stroke-width: 1.9; stroke-linejoin: round; }
.faint { stroke: #88888b; }
.sep { width: 1px; height: 30px; background: #242427; }
.pdf-left { width: 822px; display: flex; align-items: center; padding-left: 12px; }
.up { margin-left: 70px; margin-right: 11px; }
.pdf-left .sep { margin-right: 11px; }
.pageinput { margin-left: 14px; width: 83px; height: 38px; border: 1px solid #77777a; border-radius: 3px; background: #414045; text-align: right; padding: 5px 10px 0 0; line-height: 27px; }
.of { margin-left: 7px; letter-spacing: -.2px; }
.pdf-zoom { display: flex; align-items: center; }
.pdf-zoom .sep { margin: 0 11px; }
.select { margin-left: 16px; width: 210px; height: 42px; background: #4a4a4f; display: flex; align-items: center; justify-content: space-between; padding: 0 14px 1px 9px; letter-spacing: -.6px; }
.pdf-right { flex: 1; display: flex; align-items: center; justify-content: flex-end; padding-right: 13px; }
.pdf-right svg:nth-child(2) { margin-left: 21px; }
.s1 { margin: 0 20px 0 14px; height: 33px; }
.pdf-right svg:nth-child(5) { margin-left: 23px; }
.s2 { margin: 0 14px 0 15px; width: 2px; height: 33px; }

.viewer { height: 789px; background: #2a2a2e; padding: 13px 0 0 544px; display: flex; overflow: hidden; }
.vscroll { margin: 3px 0 0 537px; width: 3px; height: 476px; border-radius: 2px; background: #8f8f93; }
.page { width: 832px; height: 900px; flex: none; background: #fff; padding: 62px 0 0 57px; color: #333; font-family: "Noto Sans", sans-serif; }
.maptitle { height: 20px; line-height: 20px; margin-left: 4px; font-size: 15px; font-style: italic; color: #f28e2b; letter-spacing: .03px; }
.map { margin-top: 4px; }
.border { fill: none; stroke: #b5b5b5; stroke-width: 3; stroke-linejoin: round; }
.maplabels { font: 24px "Noto Sans", sans-serif; fill: #858585; letter-spacing: 1px; stroke: #eee; stroke-width: 3px; paint-order: stroke; }
.credit { font: 19.4px "Liberation Sans", sans-serif; fill: #555; }
.pins { fill: #6a6a6a; stroke: #444; stroke-width: 3; }
.h-country { width: 535px; margin: 8px 0 5px; height: 24px; line-height: 24px; text-align: center; font-size: 17px; font-style: italic; letter-spacing: .04px; }
.country { display: flex; height: 132px; padding-left: 1px; }
.ctable { width: 534px; height: 132px; background: #111; display: grid; grid-template-columns: 45px 118px 117px 112.5px 131px; grid-template-rows: 10px 60px 53px; column-gap: 1.5px; row-gap: 3px; padding: 1px 2px 2px 1px; }
.ctable > * { display: flex; align-items: center; padding-left: 3px; overflow: hidden; }
.ctable > .c { justify-content: center; padding-left: 0; }
.ctable > .low { padding-top: 10px; }
.ch { background: #f1eaf4; font-size: 7px; font-weight: 500; line-height: 12px; padding-top: 1px; letter-spacing: -.1px; }
.ctable > .ix { background: #fae8df; color: #4e79a7; font: italic 600 12.5px "Noto Sans", sans-serif; justify-content: center; padding-left: 0; }
.nm { background: #f1eaf4; color: #808080; font-size: 7px; }
.ct { background: #f9eee8; color: #6487b3; font: italic 13px "Noto Sans", sans-serif; }
.el { background: #f8f3ee; color: #6487b3; font: italic 13px "Noto Sans", sans-serif; box-shadow: -1px 0 #111; }
.cscroll { margin: 12px 0 0 1px; width: 10px; height: 120px; border: 1px solid #b9b9b9; background: #fff; }
.cscroll i { height: 74px; background: #efefef; border-bottom: 1px solid #b9b9b9; }
.count-head { margin-top: 4px; width: 719px; height: 25px; border: 2px solid #4a4d47; background: #eef3e2; text-align: center; font: 16px/22px "DejaVu Sans", sans-serif; letter-spacing: -.2px; }
.count { margin-top: 1px; width: 718px; height: 138px; background: #f4e9d8; display: flex; align-items: center; justify-content: flex-end; padding: 1px 5px 0 0; color: #f28e2b; font-size: 17px; font-style: italic; font-weight: 500; }
.h-world { margin: 6px 0 5px; width: 658px; height: 20px; line-height: 20px; text-align: center; font-size: 13.4px; }
.wtable { margin-left: 1px; width: 655.5px; height: 136px; background: #0b0b0b; display: grid; grid-template-columns: 152px 163px 143px 186px; grid-template-rows: 12px repeat(10, 9.6px); column-gap: 2.5px; row-gap: 2.65px; padding: 0 2px 2px 2px; font-size: 7px; font-weight: 500; line-height: 10px; }
.wtable > div { background: #f8faf0; padding-left: 2px; color: #333; }
.wtable .wh { line-height: 15px; }
.wtable .wh:nth-child(4) { margin-top: 2px; }
.wtable .c, .wtable .t, .wtable .i, .wtable .e { text-align: center; padding: 0; }
.wtable .t { background: #dce9ef; color: #86bcb6; font-size: 8px; font-style: italic; }
.wtable .i { color: #86bcb6; font-size: 8px; font-style: italic; }
.wtable .alt { background: #f4f4f4; }
.wtable .e { background: #f7f6f5; font-size: 9px; line-height: 9px; font-style: italic; font-weight: 400; }

.taskbar { height: 72px; border-top: 2px solid #4f4144; background: linear-gradient(90deg, #271926 0, #2d1b27 410px, #371c17 560px, #3b1e12 600px, #302514 650px, #2f2515 1060px, #33220f 1260px, #3b1b10 1420px, #3b1a12 1720px, #321a1a 1920px); display: flex; align-items: center; padding-bottom: 2px; }
.start { margin-left: 31px; }
.search { margin-left: 20px; width: 330px; height: 48px; border-radius: 24px; border: 1px solid #604f59; border-top: 2px solid #6d5d66; background: #4a3c45; display: flex; align-items: center; padding: 0 7px 0 16px; font-size: 20px; color: #ddd6da; }
.search span { margin-left: 15px; flex: 1; letter-spacing: -.4px; }
.apps { margin-left: 3px; display: flex; }
.app { position: relative; width: 66px; height: 60px; display: flex; align-items: center; justify-content: center; }
.app.active { width: 60px; margin: 0 3px; background: #3f3223; border: 1px solid #4a3c2e; border-radius: 6px; }
.dot { position: absolute; bottom: 1px; left: 28px; width: 9px; height: 5px; border-radius: 3px; background: #9c9490; }
.dot.wide { left: 17px; width: 24px; bottom: 0; background: #d7a0e4; }
.avatar { position: absolute; left: 35px; top: 5px; }
.wp { font: 700 19px "Liberation Serif", serif; fill: #f58a2e; }
.tm { font: 700 13px "Open Sans", sans-serif; fill: #4b53bc; }
.tray { margin-left: auto; width: 627px; display: grid; grid-template-columns: repeat(8, 48px) 24px 48px 106px 47px; align-items: center; justify-items: center; }
.clock { justify-self: end; text-align: right; font-size: 17.5px; line-height: 24px; letter-spacing: -.15px; display: flex; flex-direction: column; }
.time { letter-spacing: -.3px; }
.badge { width: 26px; height: 26px; border-radius: 50%; background: #dc9fe8; color: #2b1a2e; font-size: 15px; line-height: 25px; text-align: center; letter-spacing: -.3px; }
```
